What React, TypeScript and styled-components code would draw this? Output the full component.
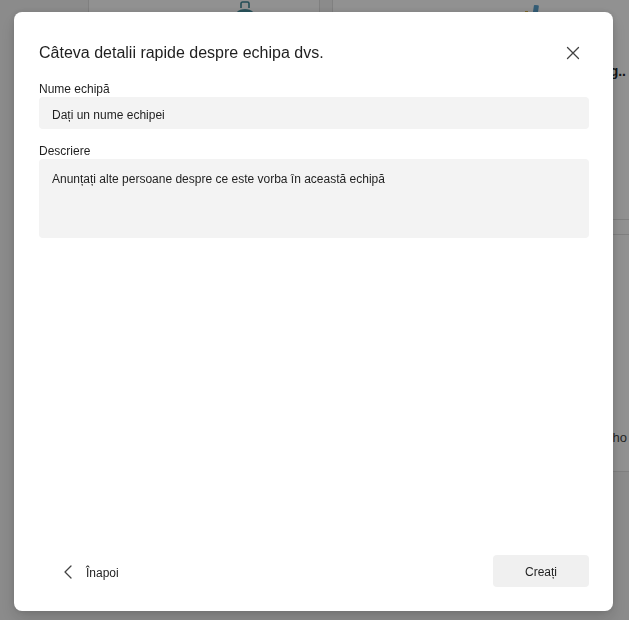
import React from 'react';
import styled, { createGlobalStyle } from 'styled-components';

const GlobalStyle = createGlobalStyle`
  html, body {
    margin: 0;
    padding: 0;
    width: 100%;
    height: 100%;
    overflow: hidden;
  }
  body {
    font-family: 'Liberation Sans', Arial, sans-serif;
    color: #242424;
    background: #f5f5f5;
  }
`;

function CloseIcon() {
  return (
    <svg width="14" height="14" viewBox="0 0 14 14" fill="none">
      <path d="M1.5 1.5L12.5 12.5M12.5 1.5L1.5 12.5" stroke="#424242" strokeWidth="1.3" strokeLinecap="round" />
    </svg>
  );
}

function ChevronLeft() {
  return (
    <svg width="10" height="16" viewBox="0 0 10 16" fill="none">
      <path d="M8 2L2 8L8 14" stroke="#424242" strokeWidth="1.3" strokeLinecap="round" strokeLinejoin="round" />
    </svg>
  );
}

function BagIcon() {
  return (
    <svg width="30" height="24" viewBox="0 0 30 24">
      <path d="M11 8V3.5C11 2.7 11.7 2 12.5 2h5c.8 0 1.5.7 1.5 1.5V8" stroke="#3f8796" strokeWidth="1.6" fill="none" />
      <ellipse cx="15" cy="20" rx="12" ry="11" fill="#4a93a2" />
    </svg>
  );
}

function ChartIcon() {
  return (
    <svg width="30" height="20" viewBox="0 0 30 20">
      <rect x="2" y="14" width="3" height="6" fill="#c85a5a" />
      <rect x="6" y="11" width="3" height="9" fill="#d7b24a" />
      <rect x="14" y="5" width="5" height="15" rx="1" fill="#5ba3cf" transform="rotate(8 16 12)" />
    </svg>
  );
}

export default function App() {
  return (
    <>
      <GlobalStyle />
      <Page>
        <CardRow>
          <Card width={232}>
            <CardArt>
              <BagIcon />
            </CardArt>
          </Card>
          <Card width={320}>
            <CardArt offset={186}>
              <ChartIcon />
            </CardArt>
            <CardTitle>Planificați lansarea în mag..</CardTitle>
            <CardRule top={140} />
            <CardRule top={14} />
            <CardText>Colaborați cu echipa de la birou sau de acasă, ho</CardText>
          </Card>
        </CardRow>
      </Page>
      <Backdrop>
        <Dialog>
          <Header>
            <Title>Câteva detalii rapide despre echipa dvs.</Title>
            <IconButton aria-label="Închideți">
              <CloseIcon />
            </IconButton>
          </Header>

          <Field>
            <Label>Nume echipă</Label>
            <Input placeholder="Dați un nume echipei" />
          </Field>

          <Field>
            <Label>Descriere</Label>
            <TextArea placeholder="Anunțați alte persoane despre ce este vorba în această echipă" />
          </Field>

          <Footer>
            <BackButton>
              <ChevronLeft />
              <span>Înapoi</span>
            </BackButton>
            <PrimaryButton>Creați</PrimaryButton>
          </Footer>
        </Dialog>
      </Backdrop>
    </>
  );
}

const Page = styled.div`
  width: 629px;
  height: 620px;
  overflow: hidden;
  background: #f5f5f5;
`;

const CardRow = styled.div`
  display: flex;
  gap: 12px;
  padding-left: 88px;
  margin-top: -200px;
`;

const Card = styled.div<{ width: number }>`
  flex: none;
  width: ${p => p.width}px;
  height: 672px;
  box-sizing: border-box;
  border: 1px solid #e1e1e1;
  border-radius: 8px;
  background: #ffffff;
  display: flex;
  flex-direction: column;
  align-items: flex-start;
`;

const CardArt = styled.div<{ offset?: number }>`
  margin-top: 199px;
  margin-left: ${p => p.offset ?? 141}px;
  height: 13px;
  overflow: hidden;
`;

const CardTitle = styled.div`
  width: 293px;
  margin-top: 50px;
  text-align: right;
  white-space: nowrap;
  font-weight: 700;
  font-size: 14px;
  color: #242424;
`;

const CardRule = styled.div<{ top: number }>`
  width: 100%;
  margin-top: ${p => p.top}px;
  border-top: 1px solid #e1e1e1;
`;

const CardText = styled.div`
  width: 294px;
  margin-top: 195px;
  text-align: right;
  white-space: nowrap;
  font-size: 13px;
  color: #424242;
`;

const Backdrop = styled.div`
  position: fixed;
  inset: 0;
  background: rgba(0, 0, 0, 0.43);
  display: flex;
  align-items: flex-start;
  justify-content: flex-start;
  padding: 12px 0 0 14px;
  box-sizing: border-box;
`;

const Dialog = styled.div`
  width: 599px;
  height: 599px;
  box-sizing: border-box;
  padding: 24px 24px 24px 25px;
  background: #ffffff;
  border-radius: 8px;
  box-shadow: 0 0 6px rgba(0, 0, 0, 0.12), 0 8px 16px rgba(0, 0, 0, 0.14);
  display: flex;
  flex-direction: column;
`;

const Header = styled.div`
  display: flex;
  align-items: center;
  justify-content: space-between;
  height: 32px;
  margin-bottom: 13px;
`;

const Title = styled.h2`
  margin: 0;
  padding-top: 2px;
  font-size: 16px;
  font-weight: 400;
  line-height: 22px;
  color: #1f1f1f;
`;

const IconButton = styled.button`
  width: 32px;
  height: 32px;
  padding: 0;
  padding-top: 2px;
  border: none;
  background: transparent;
  display: flex;
  align-items: center;
  justify-content: center;
  cursor: pointer;
`;

const Field = styled.label`
  display: flex;
  flex-direction: column;
  & + & {
    margin-top: 14px;
  }
`;

const Label = styled.span`
  font-size: 12px;
  line-height: 16px;
  color: #1f1f1f;
`;

const Input = styled.input`
  height: 32px;
  box-sizing: border-box;
  padding: 3px 13px 0;
  border: none;
  border-radius: 4px;
  background: #f3f3f3;
  font-family: inherit;
  font-size: 12px;
  color: #1f1f1f;
  outline: none;
  &::placeholder {
    color: #1f1f1f;
  }
`;

const TextArea = styled.textarea`
  height: 79px;
  box-sizing: border-box;
  padding: 12px 13px;
  border: none;
  border-radius: 4px;
  background: #f3f3f3;
  font-family: inherit;
  font-size: 12px;
  line-height: 16px;
  color: #1f1f1f;
  resize: none;
  outline: none;
  &::placeholder {
    color: #1f1f1f;
  }
`;

const Footer = styled.div`
  margin-top: auto;
  display: flex;
  align-items: center;
  justify-content: space-between;
`;

const BackButton = styled.button`
  display: flex;
  align-items: center;
  gap: 13px;
  height: 32px;
  margin-left: 24px;
  padding: 0;
  border: none;
  background: transparent;
  font-family: inherit;
  font-size: 12px;
  color: #1f1f1f;
  cursor: pointer;
  svg {
    margin-top: 1px;
  }
  span {
    padding-top: 4px;
  }
`;

const PrimaryButton = styled.button`
  width: 96px;
  height: 32px;
  padding-top: 2px;
  border: none;
  border-radius: 4px;
  background: #f0f0f0;
  font-family: inherit;
  font-size: 12px;
  color: #1f1f1f;
  cursor: pointer;
`;
